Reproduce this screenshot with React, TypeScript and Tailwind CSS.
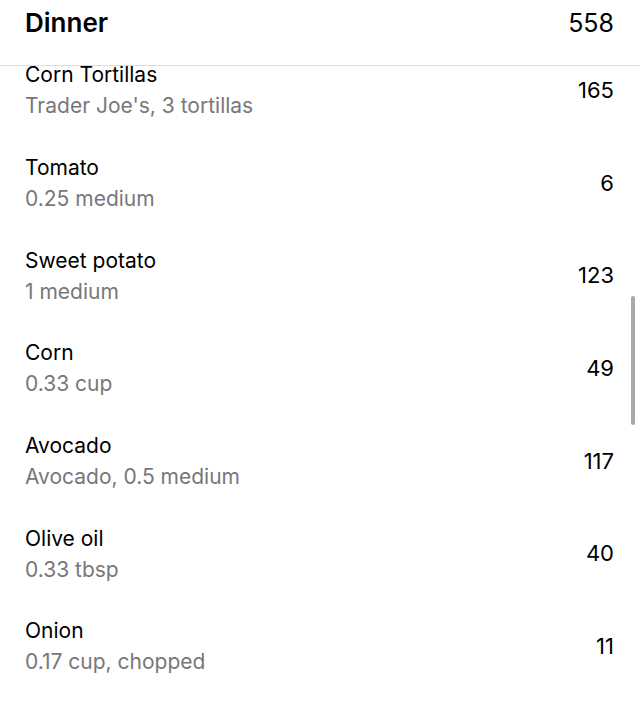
import React from "react";

const items = [
  { t: "Corn Tortillas", s: "Trader Joe's, 3 tortillas", n: "165" },
  { t: "Tomato", s: "0.25 medium", n: "6" },
  { t: "Sweet potato", s: "1 medium", n: "123" },
  { t: "Corn", s: "0.33 cup", n: "49" },
  { t: "Avocado", s: "Avocado, 0.5 medium", n: "117" },
  { t: "Olive oil", s: "0.33 tbsp", n: "40" },
  { t: "Onion", s: "0.17 cup, chopped", n: "11" },
];

export default function App() {
  return (
    <div
      className="relative w-[640px] h-[701px] bg-white overflow-hidden"
      style={{ fontFamily: "Inter, 'Liberation Sans', sans-serif" }}
    >
      <div className="relative z-10 flex h-[66px] items-start justify-between border-b border-[#dcdcdc] bg-white pl-[25px] pr-[26px] pt-[6px]">
        <span className="text-[26px] font-semibold leading-[34px] text-black">Dinner</span>
        <span className="text-[25px] leading-[34px] text-black">558</span>
      </div>
      <div className="h-[635px] overflow-hidden">
        <div className="-mt-[22px] flex flex-col">
          {items.map((it) => (
            <div key={it.t} className="flex h-[92.7px] items-center justify-between pl-[25px] pr-[26px]">
              <div className="flex flex-col">
                <span className="text-[21px] leading-[31px] text-black">{it.t}</span>
                <span className="text-[21px] leading-[31px] text-[#77777b]">{it.s}</span>
              </div>
              <span className="text-[22px] text-black">{it.n}</span>
            </div>
          ))}
        </div>
      </div>
      <div className="absolute right-[5px] top-[296px] h-[129px] w-[4px] rounded-full bg-[#a9a9a9]" />
    </div>
  );
}
